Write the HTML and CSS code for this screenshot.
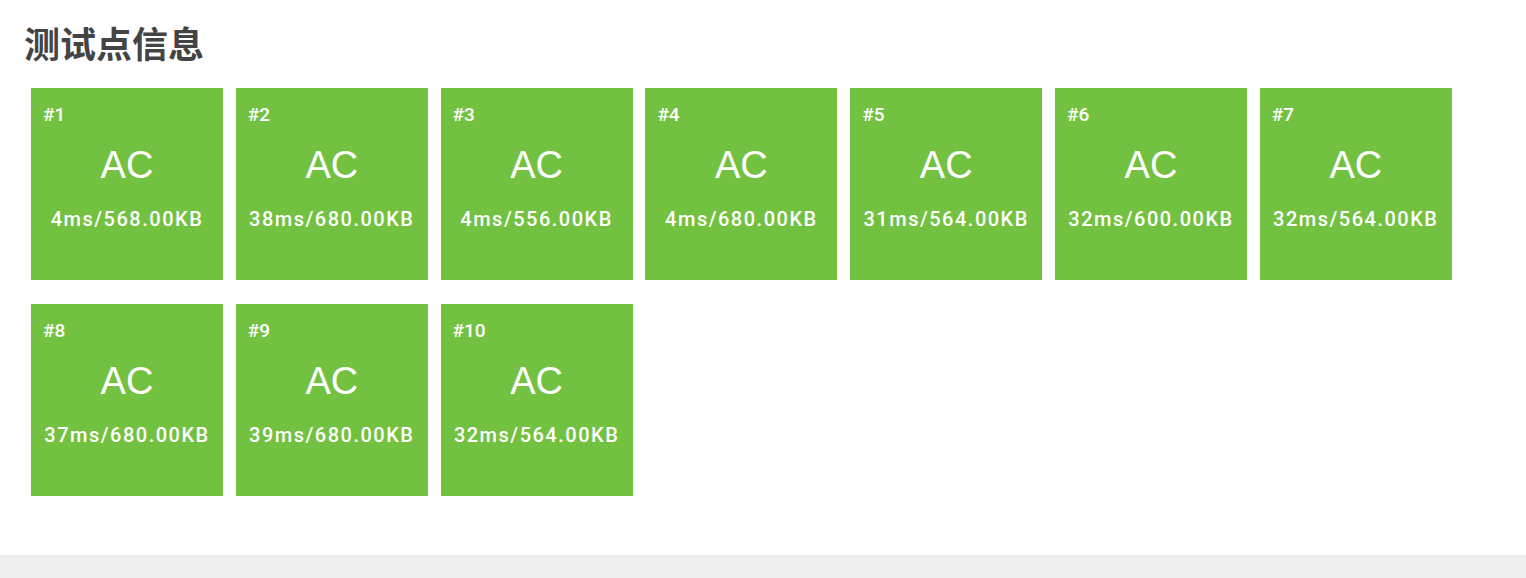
FILE: index.html
```html
<!DOCTYPE html>
<html lang="zh">
<head>
<meta charset="utf-8">
<title>测试点信息</title>
<link rel="stylesheet" href="styles.css">
</head>
<body>
<div class="panel">
  <h2 class="title">测试点信息</h2>
  <div class="cases">
    <div class="case"><div class="num">#1</div><div class="status">AC</div><div class="stat">4ms/568.00KB</div></div>
    <div class="case"><div class="num">#2</div><div class="status">AC</div><div class="stat">38ms/680.00KB</div></div>
    <div class="case"><div class="num">#3</div><div class="status">AC</div><div class="stat">4ms/556.00KB</div></div>
    <div class="case"><div class="num">#4</div><div class="status">AC</div><div class="stat">4ms/680.00KB</div></div>
    <div class="case"><div class="num">#5</div><div class="status">AC</div><div class="stat">31ms/564.00KB</div></div>
    <div class="case"><div class="num">#6</div><div class="status">AC</div><div class="stat">32ms/600.00KB</div></div>
    <div class="case"><div class="num">#7</div><div class="status">AC</div><div class="stat">32ms/564.00KB</div></div>
    <div class="case"><div class="num">#8</div><div class="status">AC</div><div class="stat">37ms/680.00KB</div></div>
    <div class="case"><div class="num">#9</div><div class="status">AC</div><div class="stat">39ms/680.00KB</div></div>
    <div class="case"><div class="num">#10</div><div class="status">AC</div><div class="stat">32ms/564.00KB</div></div>
  </div>
</div>
</body>
</html>
```
FILE: styles.css
```css
html, body {
  margin: 0;
  padding: 0;
  background: #eeeeee;
}
body {
  font-family: "Liberation Sans", "Noto Sans CJK SC", sans-serif;
}
.panel {
  background: #ffffff;
  height: 555px;
  box-sizing: border-box;
  padding: 20px 0 0 0;
  box-shadow: 0 1px 6px rgba(0, 0, 0, 0.1);
}
.title {
  margin: 0 0 0 24px;
  font-family: "Noto Sans CJK SC", sans-serif;
  font-size: 36px;
  line-height: 44px;
  font-weight: 700;
  color: #444444;
}
.cases {
  display: grid;
  grid-template-columns: repeat(7, 192px);
  column-gap: 12.8px;
  row-gap: 24px;
  margin: 24px 0 0 31px;
}
.case {
  height: 192px;
  background: #73c141;
  color: #ffffff;
  display: flex;
  flex-direction: column;
}
.num {
  font-family: Roboto, sans-serif;
  font-size: 19px;
  font-weight: 500;
  line-height: 20px;
  margin: 17px 0 0 12px;
}
.status {
  text-align: center;
  font-size: 38px;
  line-height: 44px;
  margin-top: 18px;
}
.stat {
  font-family: Roboto, sans-serif;
  text-align: center;
  font-size: 20px;
  font-weight: 500;
  line-height: 24px;
  margin-top: 20px;
  letter-spacing: 1.5px;
}
```
